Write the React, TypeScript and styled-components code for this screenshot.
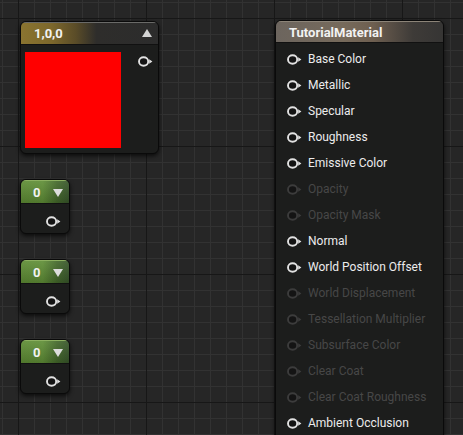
import React from "react";
import styled, { createGlobalStyle } from "styled-components";

const Global = createGlobalStyle`
  html, body { margin: 0; padding: 0; background: #262626; }
  body { font-family: Roboto, "Noto Sans", "Liberation Sans", sans-serif; }
`;

const Canvas = styled.div`
  position: relative;
  width: 463px;
  height: 435px;
  overflow: hidden;
  background-color: #262626;
  background-image:
    linear-gradient(to right, #171717 1px, transparent 1px),
    linear-gradient(to bottom, #171717 1px, transparent 1px),
    linear-gradient(to right, #323232 1px, transparent 1px),
    linear-gradient(to bottom, #323232 1px, transparent 1px);
  background-size: 128px 128px, 128px 128px, 16px 16px, 16px 16px;
  background-position: 18px 18px, 18px 18px, 2px 2px, 2px 2px;
`;

const Node = styled.div<{ $x: number; $y: number; $w: number; $h: number }>`
  position: absolute;
  left: ${(p) => p.$x}px;
  top: ${(p) => p.$y}px;
  width: ${(p) => p.$w}px;
  height: ${(p) => p.$h}px;
  box-sizing: border-box;
  display: flex;
  flex-direction: column;
  background: #1c1d1c;
  border: 1px solid #0a0a0a;
  border-radius: 6px;
  box-shadow: 0 2px 4px rgba(0, 0, 0, 0.7);
  overflow: hidden;
`;

const Header = styled.div<{ $kind: "vector" | "scalar" | "material"; $h: number }>`
  flex: none;
  height: ${(p) => p.$h}px;
  box-sizing: border-box;
  display: flex;
  align-items: center;
  justify-content: space-between;
  color: #f2f2f2;
  font-size: 13px;
  font-weight: 700;
  border-top: 1px solid
    ${(p) => (p.$kind === "scalar" ? "#8cb060" : p.$kind === "vector" ? "#6a6a68" : "#8c8478")};
  border-bottom: 1px solid #111;
  background: ${(p) =>
    p.$kind === "vector"
      ? "linear-gradient(90deg, #8a7430 0%, #7d682c 22%, #5a4c28 40%, #2e2d2b 55%, #2c2c2c 100%)"
      : p.$kind === "scalar"
      ? "linear-gradient(180deg, rgba(255,255,255,0.08), rgba(0,0,0,0.15)), linear-gradient(90deg, #5e8c34 0%, #5f8e36 45%, #43682a 75%, #37552a 100%)"
      : "linear-gradient(90deg, #6c655e 0%, #766a5b 40%, #6e5f50 58%, #3e3b38 82%, #363534 100%)"};
  padding: ${(p) =>
    p.$kind === "vector" ? "0 6px 0 13px" : p.$kind === "scalar" ? "0 6px 0 12px" : "0 8px 0 13px"};
`;

const Arrow = styled.span<{ $dir: "up" | "down" }>`
  display: block;
  width: 0;
  height: 0;
  border-left: 5px solid transparent;
  border-right: 5px solid transparent;
  ${(p) =>
    p.$dir === "up"
      ? "border-bottom: 8px solid #d4d4d4; margin-top: -1px;"
      : "border-top: 8px solid #dcdcdc; margin-top: 1px;"}
`;

const VectorBody = styled.div`
  display: flex;
  justify-content: space-between;
  align-items: flex-start;
  padding: 7px 4px 0 4px;
`;

const Swatch = styled.div`
  width: 96px;
  height: 96px;
  background: #ff0000;
`;

const PinSlot = styled.div<{ $top: number }>`
  display: flex;
  padding-top: ${(p) => p.$top}px;
`;

const ScalarBody = styled.div`
  display: flex;
  justify-content: flex-end;
  padding: 12px 7px 0 0;
`;

const MaterialList = styled.div`
  display: flex;
  flex-direction: column;
  padding: 3px 0 0 11px;
`;

const Row = styled.div<{ $on: boolean }>`
  height: 26px;
  display: flex;
  align-items: center;
  gap: 5px;
  font-size: 12px;
  color: ${(p) => (p.$on ? "#ececec" : "#474747")};
  white-space: nowrap;
`;

const Pin = ({ on = true }: { on?: boolean }) => {
  const c = on ? "#e2e2e2" : "#3c3c3c";
  return (
    <svg width="16" height="11" viewBox="0 0 16 11">
      <ellipse cx="5.6" cy="5.5" rx="4.6" ry="4.2" fill="#141414" stroke={c} strokeWidth="1.9" />
      <polygon points="11.2,3.3 14.4,5.5 11.2,7.7" fill={c} />
    </svg>
  );
};

const inputs: [string, boolean][] = [
  ["Base Color", true],
  ["Metallic", true],
  ["Specular", true],
  ["Roughness", true],
  ["Emissive Color", true],
  ["Opacity", false],
  ["Opacity Mask", false],
  ["Normal", true],
  ["World Position Offset", true],
  ["World Displacement", false],
  ["Tessellation Multiplier", false],
  ["Subsurface Color", false],
  ["Clear Coat", false],
  ["Clear Coat Roughness", false],
  ["Ambient Occlusion", true],
];

const ScalarNode = ({ y }: { y: number }) => (
  <Node $x={20} $y={y} $w={50} $h={55}>
    <Header $kind="scalar" $h={24}>
      <span>0</span>
      <Arrow $dir="down" />
    </Header>
    <ScalarBody>
      <Pin />
    </ScalarBody>
  </Node>
);

export default function App() {
  return (
    <>
      <Global />
      <Canvas>
        <Node $x={20} $y={21} $w={139} $h={133}>
          <Header $kind="vector" $h={23}>
            <span>1,0,0</span>
            <Arrow $dir="up" />
          </Header>
          <VectorBody>
            <Swatch />
            <PinSlot $top={4}>
              <Pin />
            </PinSlot>
          </VectorBody>
        </Node>

        <ScalarNode y={179} />
        <ScalarNode y={259} />
        <ScalarNode y={339} />

        <Node $x={275} $y={20} $w={169} $h={440}>
          <Header $kind="material" $h={22}>
            <span>TutorialMaterial</span>
          </Header>
          <MaterialList>
            {inputs.map(([label, on]) => (
              <Row key={label} $on={on}>
                <Pin on={on} />
                <span>{label}</span>
              </Row>
            ))}
          </MaterialList>
        </Node>
      </Canvas>
    </>
  );
}
